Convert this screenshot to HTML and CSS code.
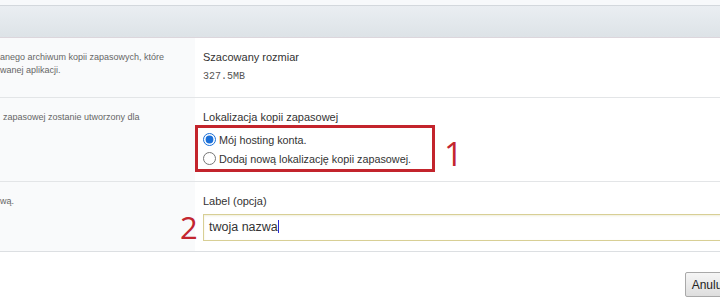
FILE: index.html
```html
<!DOCTYPE html>
<html lang="pl">
<head>
<meta charset="utf-8">
<link rel="stylesheet" href="styles.css">
</head>
<body>
<div class="page">
  <div class="top"></div>
  <div class="header"></div>
  <div class="row row-1">
    <div class="desc">
      <p>anego archiwum kopii zapasowych, które</p>
      <p>wanej aplikacji.</p>
    </div>
    <div class="field">
      <div class="label">Szacowany rozmiar</div>
      <div class="mono">327.5MB</div>
    </div>
  </div>
  <div class="row row-2">
    <div class="desc desc-indent">
      <p>zapasowej zostanie utworzony dla</p>
    </div>
    <div class="field">
      <div class="label">Lokalizacja kopii zapasowej</div>
      <div class="choice-line">
        <div class="redbox">
          <label class="radio"><input type="radio" name="loc" checked><span>Mój hosting konta.</span></label>
          <label class="radio"><input type="radio" name="loc"><span>Dodaj nową lokalizację kopii zapasowej.</span></label>
        </div>
        <span class="num num-1">1</span>
      </div>
    </div>
  </div>
  <div class="row row-3">
    <div class="desc">
      <p>wą.</p>
    </div>
    <div class="field">
      <div class="label">Label (opcja)</div>
      <div class="input-line">
        <span class="num num-2">2</span>
        <div class="textbox">twoja nazwa<span class="caret"></span></div>
      </div>
    </div>
  </div>
  <div class="actions">
    <button class="btn">Anuluj</button>
  </div>
</div>
</body>
</html>
```

FILE: styles.css
```css
* { box-sizing: border-box; }
html, body { margin: 0; padding: 0; }
body {
  width: 720px;
  height: 300px;
  overflow: hidden;
  background: #fff;
  font-family: "Liberation Sans", Arial, sans-serif;
  color: #333;
}
.page { width: 720px; overflow: hidden; height: 300px; }
.top { height: 5px; background: #f7f9fb; }
.header {
  height: 33px;
  border-top: 1px solid #d3d8dd;
  border-bottom: 1px solid #dcd6dc;
  background: linear-gradient(#eaeef2, #dde3e7);
}
.row {
  display: grid;
  grid-template-columns: 195px 1fr;
  border-bottom: 1px solid #e3e5e7;
}
.row-1 { height: 60px; }
.row-2 { height: 84px; }
.row-3 { height: 70px; border-bottom-color: #dcdfe2; }
.desc {
  background: #f9fafb;
  padding-top: 13px;
  font-size: 9px;
  line-height: 13px;
  color: #666;
  overflow: hidden;
  white-space: nowrap;
}
.desc p { margin: 0; }
.desc-indent { padding-left: 3px; }
.field {
  padding: 12px 0 0 8px;
  min-width: 0;
}
.label {
  font-size: 11px;
  line-height: 14px;
  color: #333;
}
.mono {
  margin-top: 7px;
  font-family: "Liberation Mono", "Courier New", monospace;
  font-size: 10px;
  line-height: 12px;
  color: #555;
}
.choice-line {
  display: flex;
  align-items: flex-start;
  margin-left: -8px;
  margin-top: 1px;
}
.redbox {
  border: 3px solid #c3242c;
  padding: 3px 14px 2px 5px;
  width: 240px;
  height: 47px;
  display: flex;
  flex-direction: column;
  justify-content: center;
  gap: 5px;
}
.radio {
  display: flex;
  align-items: center;
  font-size: 10.8px;
  line-height: 14px;
  color: #333;
  white-space: nowrap;
}
.radio input {
  margin: 0 3px 0 0;
  width: 13px;
  height: 13px;
  accent-color: #1a6fd8;
}
.num {
  font-family: "Open Sans", "DejaVu Sans", sans-serif;
  color: #c3262f;
  font-weight: 400;
}
.num-1 {
  font-size: 33px;
  line-height: 33px;
  margin-left: 9px;
  margin-top: 12px;
}
.input-line {
  display: flex;
  align-items: center;
  margin-left: -23px;
  margin-top: 4px;
}
.num-2 {
  font-size: 31px;
  line-height: 30px;
  width: 23px;
}
.textbox {
  flex: 1;
  height: 27px;
  border: 1px solid #d8cf95;
  box-shadow: inset 0 1px 2px rgba(200, 190, 120, 0.25);
  background: #fff;
  font-size: 12.5px;
  line-height: 25px;
  padding-left: 5px;
  color: #333;
  white-space: nowrap;
  margin-right: -20px;
}
.caret {
  display: inline-block;
  width: 1px;
  height: 13px;
  background: #2a2ad0;
  vertical-align: -2px;
}
.actions {
  display: flex;
  justify-content: flex-end;
  padding-top: 20px;
  margin-right: -12px;
}
.btn {
  font-family: "Liberation Sans", Arial, sans-serif;
  font-size: 12px;
  color: #222;
  height: 25px;
  padding: 0 6px;
  border: 1px solid #a9a9a9;
  border-radius: 2px;
  background: linear-gradient(#f6f6f6, #dedede);
}
```
